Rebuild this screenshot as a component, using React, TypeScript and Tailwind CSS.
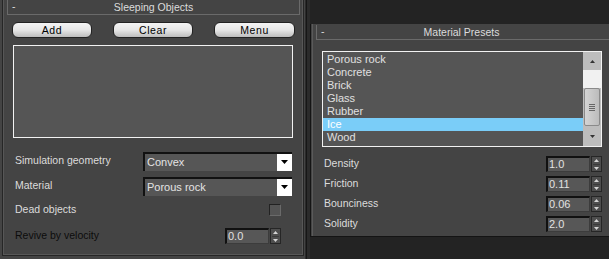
import React from 'react';

const presets = ['Porous rock', 'Concrete', 'Brick', 'Glass', 'Rubber', 'Ice', 'Wood'];

const params = [
  { label: 'Density', value: '1.0' },
  { label: 'Friction', value: '0.11' },
  { label: 'Bounciness', value: '0.06' },
  { label: 'Solidity', value: '2.0' },
];

const Arrows = () => (
  <div className="w-[11px] h-[16px] border border-[#262626] bg-[#4e4e4e] flex flex-col items-center justify-center gap-[2px]">
    <svg width="5" height="3" viewBox="0 0 5 3">
      <path d="M2.5 0L5 3H0z" fill="#d4d4d4" />
    </svg>
    <div className="w-[7px] h-px bg-[#3a3a3a]" />
    <svg width="5" height="3" viewBox="0 0 5 3">
      <path d="M0 0H5L2.5 3z" fill="#d4d4d4" />
    </svg>
  </div>
);

const Spinner = ({ value }: { value: string }) => (
  <div className="flex items-center gap-[1px]">
    <div className="w-[44px] h-[16px] bg-[#575757] border-t-2 border-l-2 border-t-[#111] border-l-[#111] border-b border-r border-b-[#3c3c3c] border-r-[#3c3c3c] text-[#e2e2e2] pl-[1px] leading-[12px] text-[11px]">
      {value}
    </div>
    <Arrows />
  </div>
);

const Dropdown = ({ value }: { value: string }) => (
  <div className="w-[149px] h-[19px] flex bg-[#565656] border-t-2 border-l-2 border-[#111]">
    <div className="flex-1 text-[#e4e4e4] pl-[2px] leading-[16px] text-[11px]">{value}</div>
    <div className="w-[15px] h-full bg-white flex items-center justify-center">
      <svg width="7" height="4" viewBox="0 0 7 4">
        <path d="M0 0H7L3.5 4z" fill="#000" />
      </svg>
    </div>
  </div>
);

const Button = ({ label, wide }: { label: string; wide?: boolean }) => (
  <div
    className={`${wide ? 'w-[81px]' : 'w-[80px]'} h-[16px] rounded-[6px] border border-[#222] bg-gradient-to-b from-[#f4f4f4] via-[#e6e6e6] to-[#bdbdbd] text-black text-center leading-[14px] tracking-[0.6px]`}
  >
    {label}
  </div>
);

export default function App() {
  return (
    <div className="w-[609px] h-[259px] overflow-hidden flex bg-[#232323] font-['Liberation_Sans',Arial,sans-serif] text-[10.5px] text-[#dcdcdc]">
      {/* Sleeping Objects */}
      <div className="w-[305px] h-full bg-[#444] pl-[2px] pr-[1px] shrink-0">
        <div className="h-[256px] border-x border-b border-[#262626]">
          <div className="h-full border-x border-b border-[#575757] pl-[3px]">
            <div className="w-[293px] h-[15px] border-x border-b border-[#6a6a6a] relative flex items-center justify-center">
              <span className="absolute left-[4px] top-0 leading-[12px]">-</span>
              <span className="leading-[13px]">Sleeping Objects</span>
            </div>
            <div className="flex gap-[21px] pl-[5px] mt-[7px]">
              <Button label="Add" />
              <Button label="Clear" />
              <Button label="Menu" wide />
            </div>
            <div className="ml-[6px] mt-[7px] w-[280px] h-[93px] border border-[#f2f2f2] bg-[#555]" />
            <div className="pl-[8px] mt-[13px] flex flex-col">
              <div className="h-[20px] flex items-center">
                <div className="w-[128px]">Simulation geometry</div>
                <Dropdown value="Convex" />
              </div>
              <div className="h-[20px] mt-[5px] flex items-center">
                <div className="w-[128px]">Material</div>
                <Dropdown value="Porous rock" />
              </div>
              <div className="h-[20px] mt-[4px] flex items-center">
                <div className="w-[254px]">Dead objects</div>
                <div className="w-[12px] h-[12px] bg-[#545454] border border-t-[#222] border-l-[#222] border-b-[#6a6a6a] border-r-[#6a6a6a]" />
              </div>
              <div className="h-[20px] mt-[6px] flex items-center">
                <div className="w-[210px] text-[#0c0c0c]">Revive by velocity</div>
                <Spinner value="0.0" />
              </div>
            </div>
          </div>
        </div>
      </div>

      {/* separator */}
      <div className="w-[5px] h-full bg-[#2b2b2b] flex shrink-0">
        <div className="w-px h-full bg-[#161616] ml-[1px]" />
      </div>

      {/* Material Presets */}
      <div className="flex-1 flex flex-col">
        <div className="h-[24px] bg-[#232323]" />
        <div className="h-[213px] bg-[#444] border-l border-b border-[#141414]">
          <div className="h-full border-l border-[#5a5a5a] ml-[1px] pl-[3px] flex flex-col">
            <div className="mt-[1px] h-[15px] border-l border-b border-[#6a6a6a] relative flex items-center justify-center pr-[3px]">
              <span className="absolute left-[4px] top-0 leading-[12px]">-</span>
              <span className="leading-[13px]">Material Presets</span>
            </div>
            <div className="ml-[6px] mt-[11px] w-[280px] h-[96px] border border-[#f2f2f2] bg-[#555] flex">
              <div className="flex-1 pt-[1px]">
                {presets.map((p) => (
                  <div
                    key={p}
                    className={`h-[13px] leading-[13px] pl-[4px] text-[11px] ${p === 'Ice' ? 'bg-[#7acdf8] text-white' : 'text-[#e0e0e0]'}`}
                  >
                    {p}
                  </div>
                ))}
              </div>
              <div className="w-[18px] h-full flex flex-col bg-[#bdbdbd]">
                <div className="h-[17px] mt-[1px] flex items-center justify-center">
                  <svg width="5" height="3" viewBox="0 0 5 3">
                    <path d="M2.5 0L5 3H0z" fill="#333" />
                  </svg>
                </div>
                <div className="h-[18px] bg-[#f1f1f1]" />
                <div className="h-[38px] mx-[1px] rounded-[2px] border border-[#8a8a8a] bg-gradient-to-r from-[#d4d4d4] to-[#bcbcbc] flex flex-col items-center justify-center gap-[1px]">
                  <div className="w-[6px] h-px bg-[#666]" />
                  <div className="w-[6px] h-px bg-[#666]" />
                  <div className="w-[6px] h-px bg-[#666]" />
                  <div className="w-[6px] h-px bg-[#666]" />
                </div>
                <div className="flex-1 flex items-center justify-center">
                  <svg width="5" height="3" viewBox="0 0 5 3">
                    <path d="M0 0H5L2.5 3z" fill="#333" />
                  </svg>
                </div>
              </div>
            </div>
            <div className="pl-[8px] mt-[9px] flex flex-col gap-[4px]">
              {params.map((r) => (
                <div key={r.label} className="h-[16px] flex items-center">
                  <div className="w-[222px]">{r.label}</div>
                  <Spinner value={r.value} />
                </div>
              ))}
            </div>
          </div>
        </div>
      </div>
    </div>
  );
}
